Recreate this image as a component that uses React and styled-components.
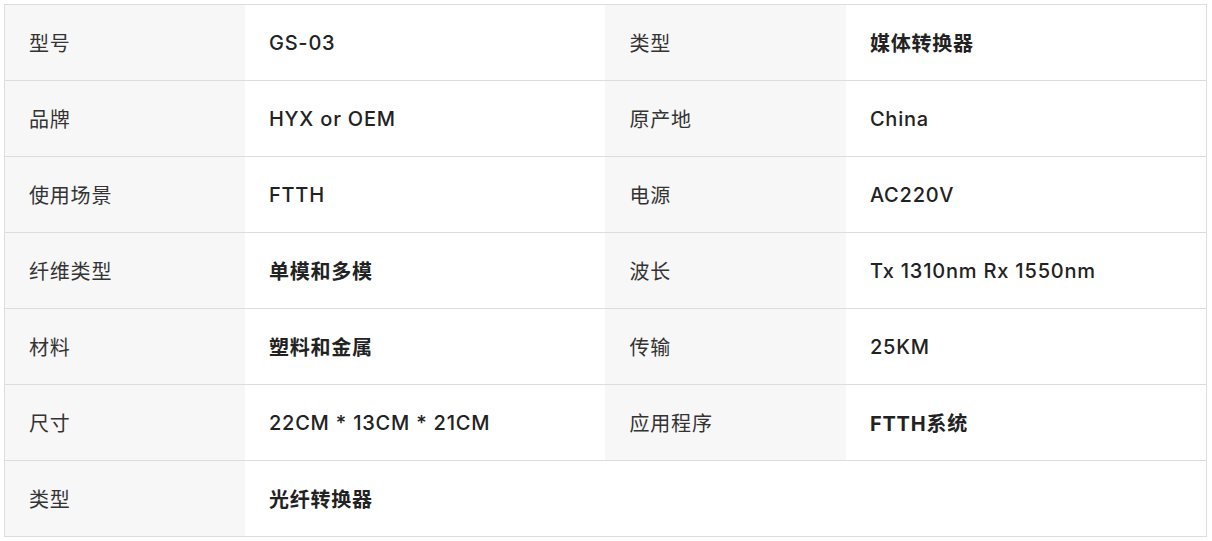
import React from "react";
import styled, { createGlobalStyle } from "styled-components";

const Global = createGlobalStyle`
  html, body { margin: 0; padding: 0; background: #fff; }
  body { font-family: Inter, "Noto Sans CJK SC", sans-serif; }
`;

const Wrap = styled.div`
  padding: 4px 5px 4px 4px;
`;

const Table = styled.table`
  width: 100%;
  border-collapse: collapse;
  table-layout: fixed;
  border: 1px solid #dddddd;
`;

const Row = styled.tr`
  height: 76px;
  border-bottom: 1px solid #dddddd;
`;

const Label = styled.td`
  width: 20%;
  background: #f7f7f7;
  color: #333;
  font-size: 20px;
  letter-spacing: 0.8px;
  font-weight: 400;
  padding: 0 24px;
  vertical-align: middle;
  box-sizing: border-box;
`;

const Value = styled.td`
  width: 30%;
  background: #fff;
  color: #222;
  font-size: 20px;
  letter-spacing: 0.8px;
  font-weight: ${(p) => (p.$bold ? 700 : 500)};
  padding: 0 24px;
  vertical-align: middle;
  box-sizing: border-box;
`;

const rows = [
  [["型号", "GS-03"], ["类型", "媒体转换器", true]],
  [["品牌", "HYX or OEM"], ["原产地", "China"]],
  [["使用场景", "FTTH"], ["电源", "AC220V"]],
  [["纤维类型", "单模和多模", true], ["波长", "Tx 1310nm Rx 1550nm"]],
  [["材料", "塑料和金属", true], ["传输", "25KM"]],
  [["尺寸", "22CM * 13CM * 21CM"], ["应用程序", "FTTH系统", true]],
  [["类型", "光纤转换器", true], null],
];

export default function App() {
  return (
    <>
      <Global />
      <Wrap>
        <Table>
          <tbody>
            {rows.map((r, i) => (
              <Row key={i}>
                <Label>{r[0][0]}</Label>
                <Value $bold={r[0][2]}>{r[0][1]}</Value>
                {r[1] ? (
                  <>
                    <Label>{r[1][0]}</Label>
                    <Value $bold={r[1][2]}>{r[1][1]}</Value>
                  </>
                ) : (
                  <Value colSpan={2} />
                )}
              </Row>
            ))}
          </tbody>
        </Table>
      </Wrap>
    </>
  );
}
